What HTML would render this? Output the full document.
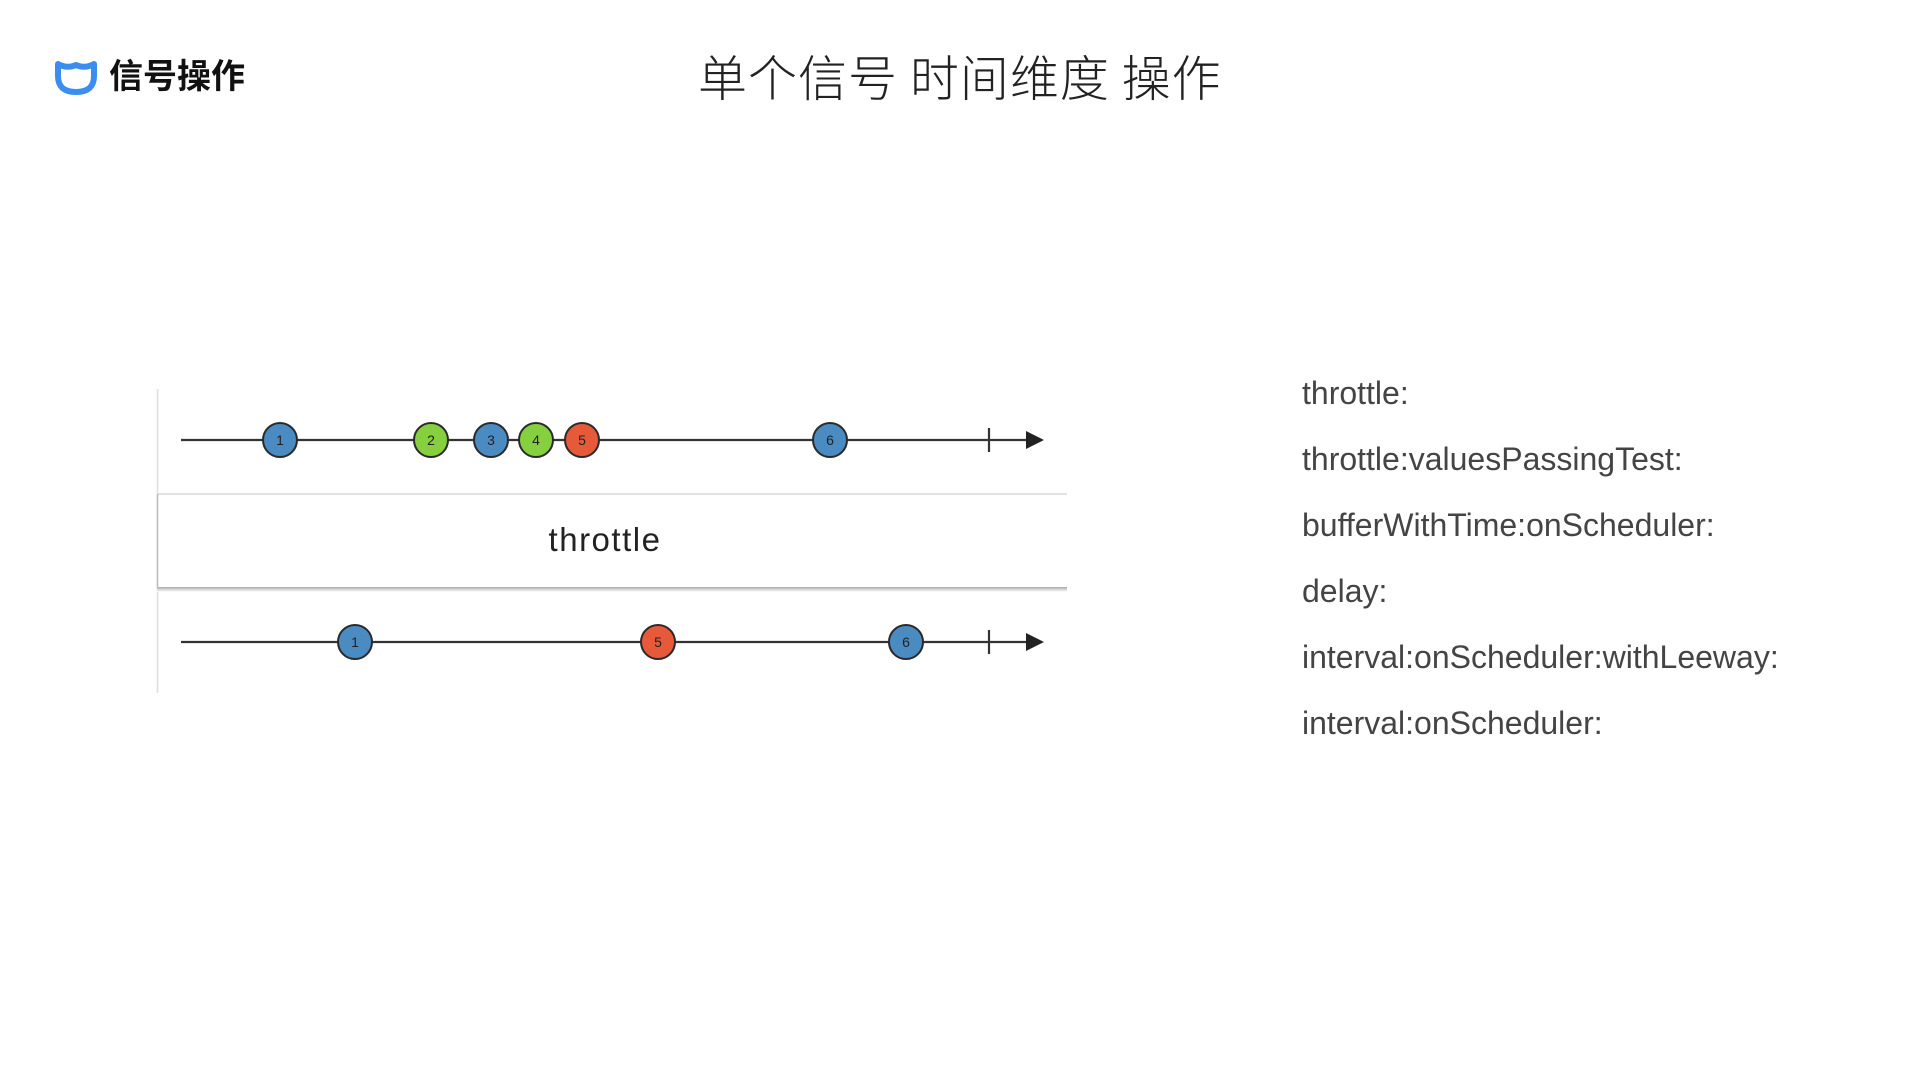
<!DOCTYPE html>
<html><head><meta charset="utf-8"><style>
body{margin:0;width:1920px;height:1080px;background:#fff;position:relative;overflow:hidden;font-family:"Liberation Sans","Noto Sans CJK SC",sans-serif}
.logo{position:absolute;left:109px;top:56px;font-size:34px;font-weight:bold;color:#111;line-height:42px}
.title{position:absolute;left:698px;top:46px;font-size:49px;font-weight:300;color:#222;line-height:60px;letter-spacing:1px;white-space:pre;font-family:"Noto Sans CJK SC",sans-serif}
.list{position:absolute;left:1302px;top:360px;font-size:32px;color:#444;line-height:66px}
</style></head><body>
<svg style="position:absolute;left:53px;top:58px" width="46" height="38" viewBox="0 0 46 38"><path d="M5 6 Q14 11 23 7 Q32 11 41 6 L41 18 Q41 34 23 34 Q5 34 5 18 Z" fill="none" stroke="#3b8ef0" stroke-width="6" stroke-linejoin="round"/></svg>
<div class="logo">信号操作</div>
<div class="title">单个信号 时间维度 操作</div>
<svg style="position:absolute;left:0;top:0" width="1100" height="720">
<defs><linearGradient id="sh" x1="0" y1="0" x2="0" y2="1"><stop offset="0" stop-color="#aaa"/><stop offset="1" stop-color="#fff"/></linearGradient></defs>
<line x1="157.5" y1="389" x2="157.5" y2="693" stroke="#ddd" stroke-width="1.5"/>
<rect x="157" y="493" width="910" height="95" fill="#fff"/>
<line x1="157" y1="494" x2="1067" y2="494" stroke="#e2e2e2" stroke-width="2"/>
<rect x="157" y="587" width="910" height="5" fill="url(#sh)"/>
<line x1="157.5" y1="494" x2="157.5" y2="588" stroke="#bbb" stroke-width="1.5"/>
<text x="605" y="551" text-anchor="middle" font-size="33" fill="#222" letter-spacing="1.5" font-family="Liberation Sans, sans-serif">throttle</text>
<g stroke="#333" stroke-width="2.2">
<line x1="181" y1="440" x2="1030" y2="440"/><line x1="989" y1="428" x2="989" y2="452"/>
<line x1="181" y1="642" x2="1030" y2="642"/><line x1="989" y1="630" x2="989" y2="654"/>
</g>
<polygon points="1026,431 1044,440 1026,449" fill="#222"/>
<polygon points="1026,633 1044,642 1026,651" fill="#222"/>
<g stroke="#2a2a2a" stroke-width="2">
<circle cx="280" cy="440" r="17" fill="#4a8bc2"/><circle cx="431" cy="440" r="17" fill="#86d03f"/><circle cx="491" cy="440" r="17" fill="#4a8bc2"/><circle cx="536" cy="440" r="17" fill="#86d03f"/><circle cx="582" cy="440" r="17" fill="#e65a3a"/><circle cx="830" cy="440" r="17" fill="#4a8bc2"/>
<circle cx="355" cy="642" r="17" fill="#4a8bc2"/><circle cx="658" cy="642" r="17" fill="#e65a3a"/><circle cx="906" cy="642" r="17" fill="#4a8bc2"/>
</g>
<g font-size="14" text-anchor="middle" fill="#222" font-family="Liberation Sans, sans-serif">
<text x="280" y="445">1</text><text x="431" y="445">2</text><text x="491" y="445">3</text><text x="536" y="445">4</text><text x="582" y="445">5</text><text x="830" y="445">6</text>
<text x="355" y="647">1</text><text x="658" y="647">5</text><text x="906" y="647">6</text>
</g>
</svg>
<div class="list">throttle:<br>throttle:valuesPassingTest:<br>bufferWithTime:onScheduler:<br>delay:<br>interval:onScheduler:withLeeway:<br>interval:onScheduler:</div>
</body></html>
